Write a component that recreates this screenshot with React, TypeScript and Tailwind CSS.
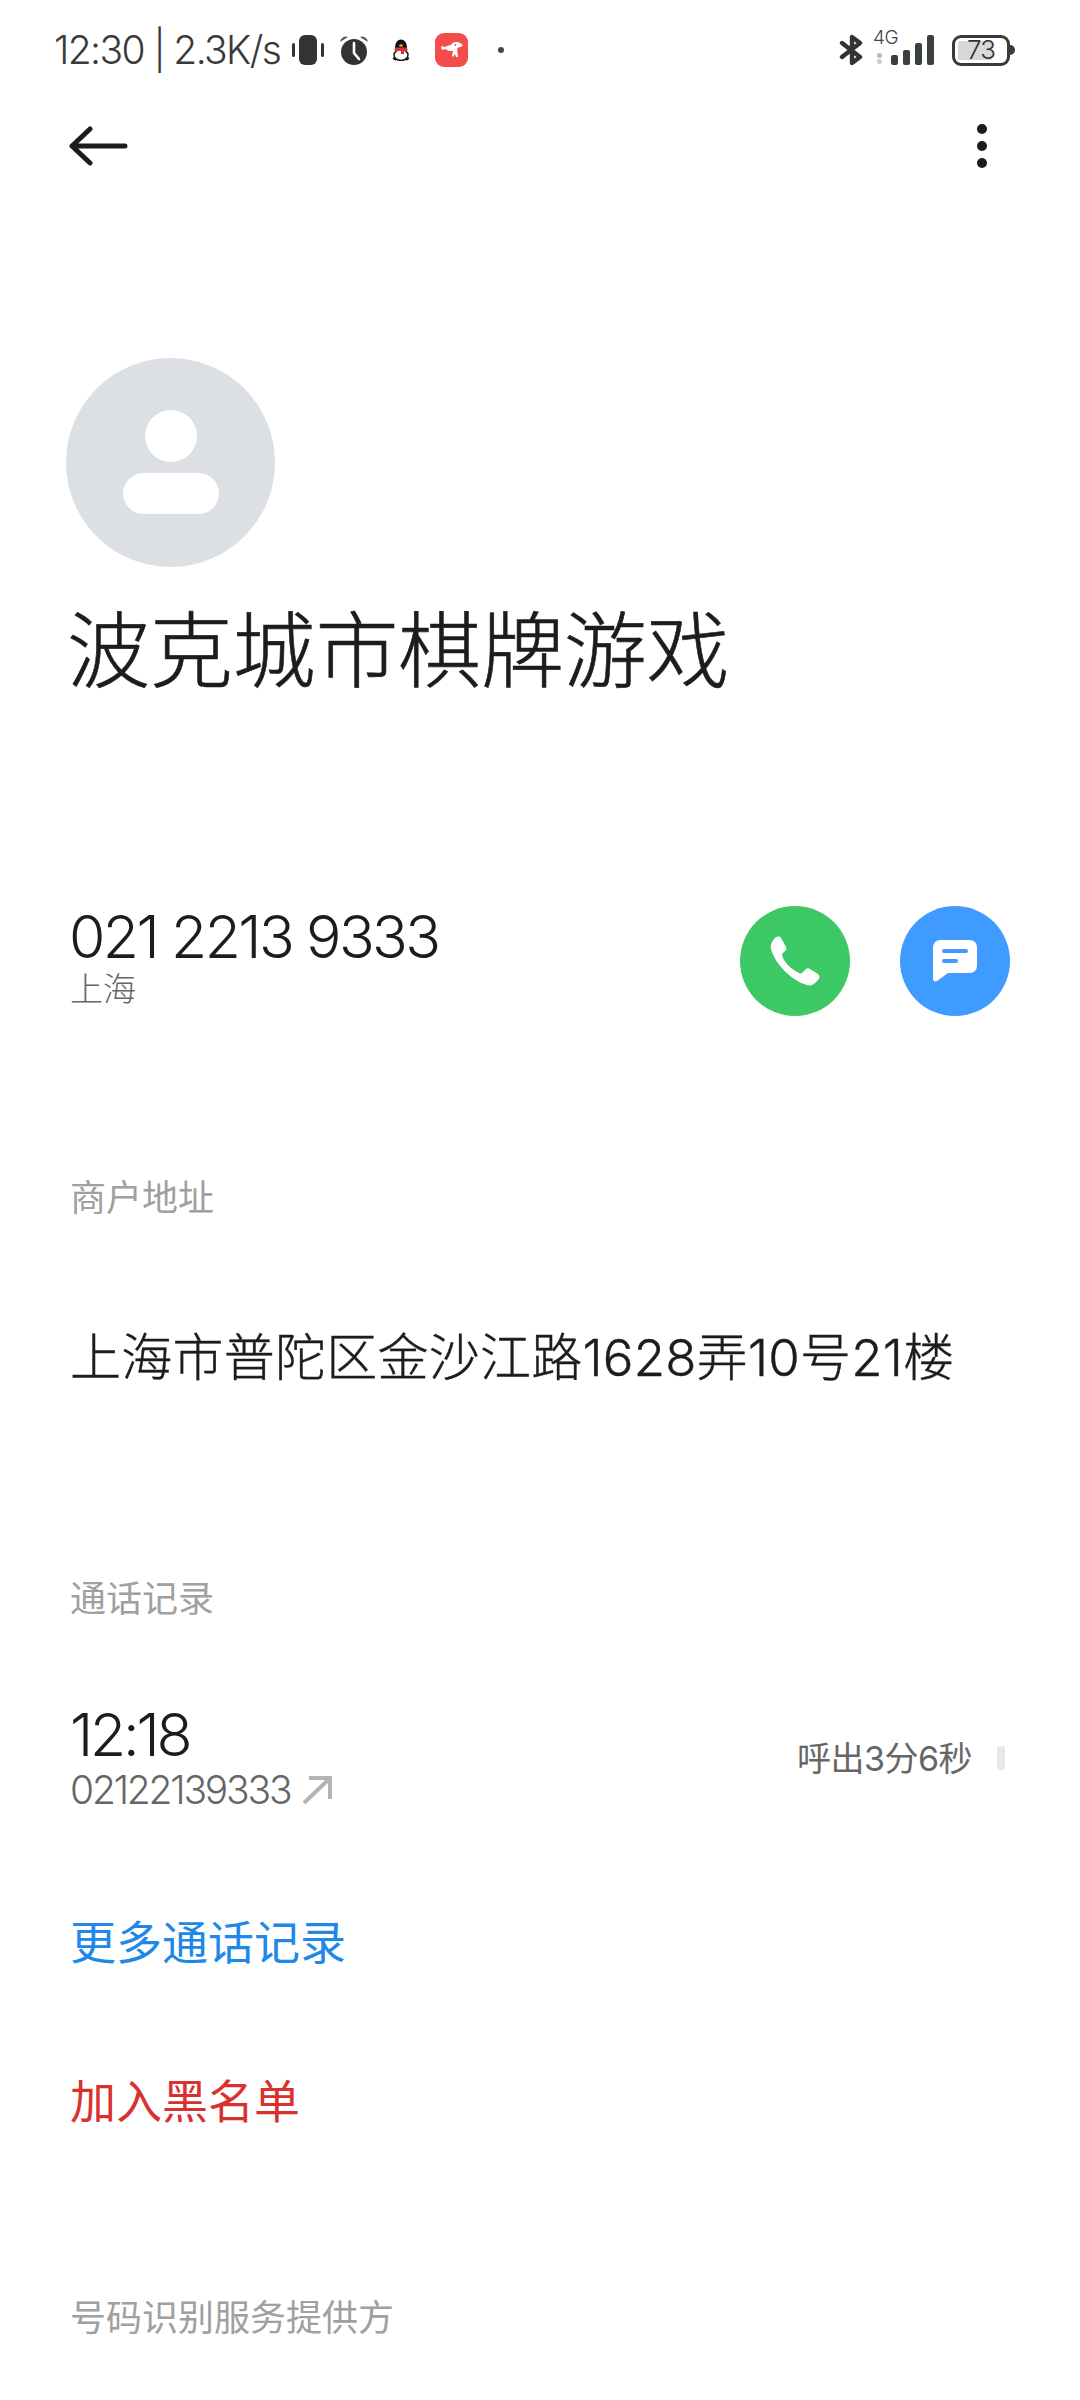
const sans = { fontFamily: '"Inter", "Noto Sans CJK SC", sans-serif' };

function StatusBar() {
  return (
    <div className="flex h-[100px] items-center justify-between pl-[54px] pr-[65px]">
      <div className="flex items-center">
        <span className="-mt-[2px] w-[240px] whitespace-nowrap text-[39px] font-light leading-none tracking-[-1.6px] text-[#3a3a3a]">
          12:30 | 2.3K/s
        </span>
        <svg width="32" height="32" viewBox="0 0 32 32" className="-ml-[2px]" fill="#333">
          <rect x="7" y="1" width="18" height="30" rx="6" />
          <rect x="0" y="9" width="3" height="14" rx="1.5" />
          <rect x="29" y="9" width="3" height="14" rx="1.5" />
        </svg>
        <svg width="30" height="32" viewBox="0 0 30 32" className="ml-[15px]">
          <circle cx="15" cy="18" r="13" fill="#333" />
          <path d="M1 8 a6 6 0 0 1 8 -5z M29 8 a6 6 0 0 0 -8 -5z" fill="#555" />
          <path d="M15 9v10l5 6" stroke="#fff" strokeWidth="2.6" fill="none" strokeLinecap="round" />
        </svg>
        <svg width="20" height="22" viewBox="0 0 20 22" className="ml-[22px]">
          <ellipse cx="10" cy="8" rx="6" ry="7.5" fill="#111" />
          <ellipse cx="10" cy="16" rx="7" ry="5.5" fill="#fff" stroke="#111" strokeWidth="1.4" />
          <rect x="3.5" y="8.5" width="13" height="3.5" rx="1.5" fill="#d1343b" />
          <rect x="10" y="11" width="3" height="4" fill="#d1343b" />
          <ellipse cx="10" cy="6.5" rx="2" ry="1.2" fill="#f0a020" />
          <path d="M2 19l3 2M18 19l-3 2" stroke="#111" strokeWidth="1.6" />
        </svg>
        <span className="ml-[24px] flex h-[34px] w-[33px] items-center justify-center rounded-[9px] bg-[#f44b4b]">
          <svg width="22" height="20" viewBox="0 0 22 20" fill="#fff">
            <path d="M0 6l4 1c2-1 4-2 6-2 1-3 6-4 9-2l3 2-2 2h-2l-2 2 1 8h-2l-1-3-2 3-1-1 1-5H8L4 9 1 10z" />
            <circle cx="14.5" cy="5" r="0.9" fill="#f44b4b" />
          </svg>
        </span>
        <span className="ml-[30px] h-[6px] w-[6px] rounded-full bg-[#444]" />
      </div>
      <div className="flex items-center">
        <svg width="24" height="32" viewBox="0 0 24 32" fill="none" stroke="#333" strokeWidth="4.4" strokeLinejoin="round" strokeLinecap="round">
          <path d="M3 9l18 14-8 6V3l8 6L3 23" />
        </svg>
        <div className="-mt-[4px] ml-[10px] flex h-[38px] w-[18px] flex-col items-start">
          <span className="whitespace-nowrap text-[19px] font-light leading-[18px] tracking-[-0.5px] text-[#444]">4G</span>
          <span className="ml-[4px] mt-[6px] h-[5px] w-[5px] rounded-full bg-[#bbb]" />
          <span className="ml-[4px] mt-[1px] h-[5px] w-[5px] rounded-full bg-[#ccc]" />
        </div>
        <div className="flex items-end gap-[5px]">
          <span className="h-[10px] w-[7px] rounded-[2px] bg-[#3a3f3f]" />
          <span className="h-[15px] w-[7px] rounded-[2px] bg-[#3a3f3f]" />
          <span className="h-[22px] w-[7px] rounded-[2px] bg-[#3a3f3f]" />
          <span className="h-[30px] w-[7px] rounded-[2px] bg-[#3a3f3f]" />
        </div>
        <div className="relative ml-[18px] flex h-[31px] w-[58px] items-center rounded-[9px] border-[3px] border-[#3a3a3a] p-[3px]">
          <span className="h-full w-[34px] rounded-[2px] bg-[#d8d8d8]" />
          <span className="absolute inset-0 flex items-center justify-center text-[26px] font-light leading-none tracking-[-1px] text-[#333]">
            73
          </span>
        </div>
        <span className="h-[10px] w-[5px] rounded-r-full bg-[#3a3a3a]" />
      </div>
    </div>
  );
}

function Header() {
  return (
    <div className="flex h-[92px] items-center justify-between pl-[69px] pr-[93px]">
      <svg width="59" height="40" viewBox="0 0 59 40" fill="none" stroke="#1c1c1c" strokeWidth="5" strokeLinecap="round" strokeLinejoin="round">
        <path d="M21 3 3 20l18 17M3 20h53" />
      </svg>
      <div className="flex flex-col gap-[7px]">
        <span className="h-[10px] w-[10px] rounded-full bg-[#1c1c1c]" />
        <span className="h-[10px] w-[10px] rounded-full bg-[#1c1c1c]" />
        <span className="h-[10px] w-[10px] rounded-full bg-[#1c1c1c]" />
      </div>
    </div>
  );
}

function SectionLabel({ text }: { text: string }) {
  return <div className="text-[36px] font-normal leading-none text-[#a0a0a0]">{text}</div>;
}

export default function App() {
  return (
    <div className="h-[2400px] w-[1080px] overflow-hidden bg-white" style={sans}>
      <StatusBar />
      <Header />
      <div className="pl-[70px] pr-[70px]">
        <div className="-ml-[4px] mt-[166px] flex h-[209px] w-[209px] flex-col items-center rounded-full bg-[#dcdfe3] pt-[52px]">
          <span className="h-[52px] w-[52px] rounded-full bg-white" />
          <span className="mt-[11px] h-[41px] w-[96px] rounded-full bg-white" />
        </div>

        <h1 className="-ml-[3px] mt-[34px] whitespace-nowrap text-[83px] font-light leading-[100px] tracking-[-0.2px] text-[#1c1c1c] [-webkit-text-stroke:0.6px_#1c1c1c]">
          波克城市棋牌游戏
        </h1>

        <div className="mt-[205px] flex h-[110px] items-center justify-between">
          <div className="-ml-[1px] -mt-[6px]">
            <div className="text-[59px] font-light leading-[60px] tracking-[-2.6px] text-[#1c1c1c]">021 2213 9333</div>
            <div className="ml-[1px] mt-[2px] text-[33px] font-light leading-[40px] text-[#666]">上海</div>
          </div>
          <div className="flex gap-[50px]">
            <span className="flex h-[110px] w-[110px] items-center justify-center rounded-full bg-[#3cc864]">
              <svg width="50" height="50" viewBox="0 0 50 50" fill="#fff">
                <path d="M5 2C7 0 10 0 11 2L16 11C17 13 16 14 15 15L12 18C12 20 13 22 14 24C18 30 23 34 29 37C31 38 32 37 33 36L36 33C37 32 39 32 40 33L48 38C50 40 50 42 48 44L45 47C43 49 40 50 37 49C22 45 5 28 1 13C0 9 2 5 5 2Z" />
              </svg>
            </span>
            <span className="flex h-[110px] w-[110px] items-center justify-center rounded-full bg-[#3f9bff]">
              <svg width="46" height="44" viewBox="0 0 46 44">
                <path d="M8 1h30a7 7 0 0 1 7 7v19a7 7 0 0 1-7 7H16L5 42c-2 1-4 0-4-2V8a7 7 0 0 1 7-7z" fill="#fff" />
                <path d="M12 12h22M12 22h12" stroke="#3f9bff" strokeWidth="4" strokeLinecap="round" />
              </svg>
            </span>
          </div>
        </div>

        <div className="mt-[164px]">
          <SectionLabel text="商户地址" />
        </div>

        <div className="mt-[107px] whitespace-nowrap text-[51px] font-light leading-[70px] tracking-[0.25px] text-[#1c1c1c] [-webkit-text-stroke:0.4px_#1c1c1c]">
          上海市普陀区金沙江路1628弄10号21楼
        </div>

        <div className="mt-[188px]">
          <SectionLabel text="通话记录" />
        </div>

        <div className="mt-[87px] flex items-center justify-between pr-[5px]">
          <div>
            <div className="text-[59px] font-light leading-[62px] tracking-[-3.2px] text-[#1c1c1c]">12:18</div>
            <div className="flex items-center">
              <span className="text-[39px] font-light leading-[48px] tracking-[-2.2px] text-[#666]">02122139333</span>
              <svg width="30" height="30" viewBox="0 0 30 30" className="ml-[12px]" fill="none" stroke="#b3b3b3" strokeWidth="4">
                <path d="M2 28 27 4M7 3h21v21" />
              </svg>
            </div>
          </div>
          <div className="-mt-[2px] flex items-center">
            <span className="text-[34px] font-normal tracking-[-0.5px] text-[#666]">呼出3分6秒</span>
            <span className="ml-[25px] h-[24px] w-[8px] rounded-[2px] bg-[#e8e8e8]" />
          </div>
        </div>

        <div className="mt-[98px] text-[46px] leading-[60px] text-[#2088e8]">更多通话记录</div>
        <div className="mt-[99px] text-[46px] leading-[60px] text-[#d93030]">加入黑名单</div>

        <div className="mt-[169px]">
          <SectionLabel text="号码识别服务提供方" />
        </div>
      </div>
    </div>
  );
}
